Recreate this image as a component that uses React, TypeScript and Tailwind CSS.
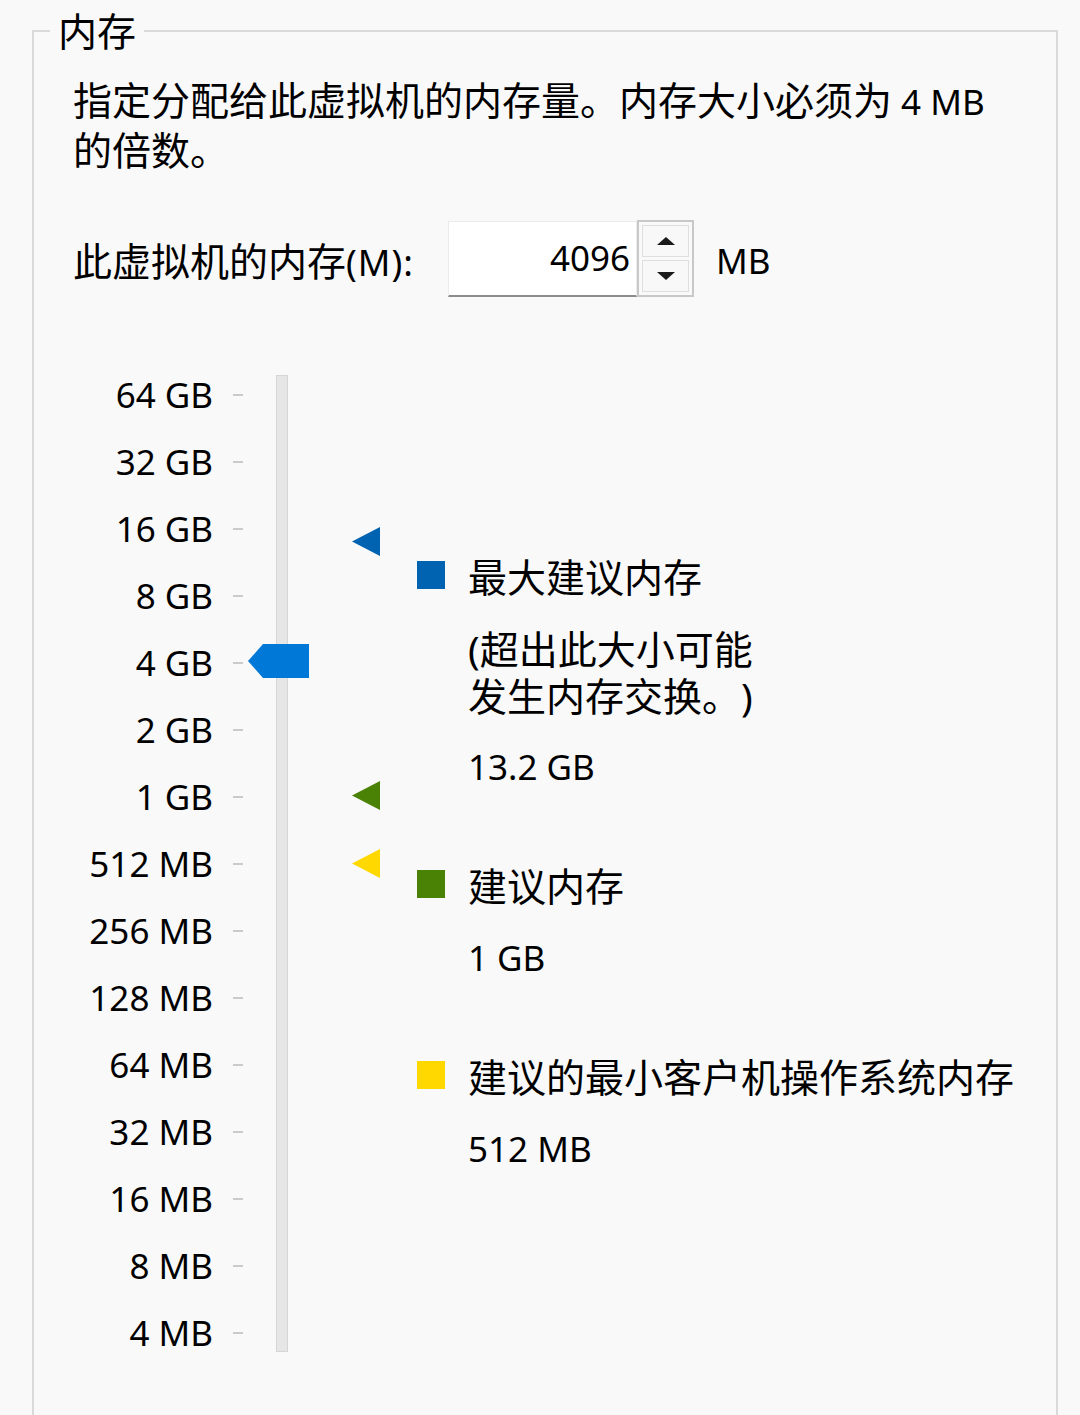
const scale = [
  "64 GB",
  "32 GB",
  "16 GB",
  "8 GB",
  "4 GB",
  "2 GB",
  "1 GB",
  "512 MB",
  "256 MB",
  "128 MB",
  "64 MB",
  "32 MB",
  "16 MB",
  "8 MB",
  "4 MB",
];

function Marker({ color, top }: { color: string; top: number }) {
  return (
    <svg
      width="28"
      height="29"
      viewBox="0 0 28 29"
      className="absolute left-[279px]"
      style={{ top }}
    >
      <polygon points="0,14.5 28,0 28,29" fill={color} />
    </svg>
  );
}

function Arrow({ down }: { down?: boolean }) {
  return (
    <svg width="18" height="8" viewBox="0 0 18 8">
      <polygon points={down ? "0,0 18,0 9,8" : "9,0 18,8 0,8"} fill="#1a1a1a" />
    </svg>
  );
}

export default function App() {
  return (
    <div className="h-[1415px] overflow-hidden bg-[#f9f9f9] pl-[32px] pr-[22px] pt-[7px] font-['Noto_Sans','Noto_Sans_CJK_SC',sans-serif] text-black [text-spacing-trim:space-all]">
      <fieldset className="min-h-[1460px] border-2 border-[#dadada]">
        <legend className="ml-[16px] px-[8px] text-[39px] leading-[48px]">内存</legend>

        <div className="pl-[39px]">
          <p className="mt-[21px] whitespace-nowrap text-[39px] leading-[48px]">
            指定分配给此虚拟机的内存量。内存大小必须为<span className="text-[35px]"> 4 MB</span>
            <br />
            的倍数。
          </p>

          <div className="mt-[46px] flex items-center">
            <span className="mt-[6px] w-[375px] whitespace-nowrap text-[39px] leading-[48px]">
              此虚拟机的内存<span className="text-[36px] tracking-[1px]">(M):</span>
            </span>
            <div className="flex h-[76px] w-[189px] items-center justify-end border border-b-2 border-[#ececec] border-b-[#8c8c8c] bg-white pr-[6px] text-[35px]">
              4096
            </div>
            <div className="flex h-[77px] w-[57px] flex-col gap-[3px] border-2 border-[#c8c8c8] p-[3px]">
              <div className="flex flex-1 items-center justify-center border border-[#dedede] bg-[#f8f8f8]">
                <Arrow />
              </div>
              <div className="flex flex-1 items-center justify-center border border-[#dedede] bg-[#f8f8f8]">
                <Arrow down />
              </div>
            </div>
            <span className="ml-[22px] mt-[6px] text-[35px]">MB</span>
          </div>

          <div className="relative mt-[64px] flex">
            <div className="flex flex-col">
              {scale.map((label) => (
                <div key={label} className="flex h-[67px] items-center">
                  <span className="w-[140px] text-right text-[35px] leading-none">{label}</span>
                  <span className="ml-[20px] h-[2px] w-[10px] bg-[#cbcbcb]" />
                </div>
              ))}
            </div>

            <div className="my-[14px] ml-[33px] w-[12px] border border-[#d6d6d6] bg-[#e6e6e6]" />

            <svg
              width="61"
              height="34"
              viewBox="0 0 61 34"
              className="absolute left-[175px] top-[283px]"
            >
              <polygon points="0,17 15,0 61,0 61,34 15,34" fill="#0078d7" />
            </svg>
            <Marker color="#0063b1" top={166} />
            <Marker color="#498205" top={420} />
            <Marker color="#ffd800" top={488} />

            <div className="ml-[129px] flex flex-col gap-[71px] pt-[192px]">
              <div className="flex gap-[23px]">
                <span className="mt-[8px] h-[28px] w-[28px] bg-[#0063b1]" />
                <div className="flex flex-col">
                  <span className="text-[39px] leading-[48px]">最大建议内存</span>
                  <span className="mt-[24px] flex flex-col text-[39px] leading-[47px]">
                    <span>(超出此大小可能</span>
                    <span>发生内存交换。)</span>
                  </span>
                  <span className="mt-[24px] text-[35px] leading-[48px]">13.2 GB</span>
                </div>
              </div>

              <div className="flex gap-[23px]">
                <span className="mt-[8px] h-[28px] w-[28px] bg-[#498205]" />
                <div className="flex flex-col">
                  <span className="text-[39px] leading-[48px]">建议内存</span>
                  <span className="mt-[24px] text-[35px] leading-[48px]">1 GB</span>
                </div>
              </div>

              <div className="flex gap-[23px]">
                <span className="mt-[8px] h-[28px] w-[28px] bg-[#ffd800]" />
                <div className="flex flex-col">
                  <span className="whitespace-nowrap text-[39px] leading-[48px]">建议的最小客户机操作系统内存</span>
                  <span className="mt-[24px] text-[35px] leading-[48px]">512 MB</span>
                </div>
              </div>
            </div>
          </div>
        </div>
      </fieldset>
    </div>
  );
}
